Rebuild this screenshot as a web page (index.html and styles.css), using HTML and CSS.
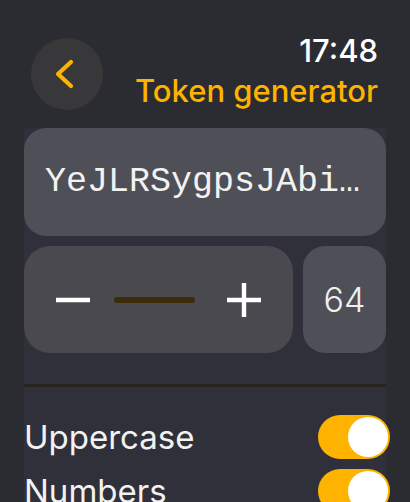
FILE: index.html
```html
<!DOCTYPE html>
<html lang="en">
<head>
  <meta charset="UTF-8">
  <meta name="viewport" content="width=device-width, initial-scale=1.0">
  <title>Token generator</title>
  <link rel="stylesheet" href="styles.css">
</head>
<body>
  <header class="top">
    <button class="back" type="button" aria-label="Back">
      <svg width="20" height="30" viewBox="0 0 20 30">
        <polyline points="16,3 3,15 16,27" fill="none" stroke="#fdb300" stroke-width="4.2" stroke-linecap="round" stroke-linejoin="round"/>
      </svg>
    </button>
    <div class="titles">
      <div class="time">17:48</div>
      <div class="title">Token generator</div>
    </div>
  </header>

  <main class="panel">
    <div class="token">YeJLRSygpsJAbi…</div>

    <div class="length-row">
      <div class="stepper">
        <svg class="sign minus" width="34" height="34" viewBox="0 0 34 34">
          <line x1="0" y1="17" x2="34" y2="17" stroke="#fff" stroke-width="4.4"/>
        </svg>
        <span class="bar"></span>
        <svg class="sign plus" width="34" height="34" viewBox="0 0 34 34">
          <line x1="0" y1="17" x2="34" y2="17" stroke="#fff" stroke-width="4.4"/>
          <line x1="17" y1="0" x2="17" y2="34" stroke="#fff" stroke-width="4.4"/>
        </svg>
      </div>
      <div class="count">64</div>
    </div>

    <div class="divider"></div>

    <div class="options">
      <div class="option">
        <span class="label">Uppercase</span>
        <span class="toggle"><span class="knob"></span></span>
      </div>
      <div class="option">
        <span class="label">Numbers</span>
        <span class="toggle"><span class="knob"></span></span>
      </div>
    </div>
  </main>
</body>
</html>
```

FILE: styles.css
```css
body {
  margin: 0;
  height: 502px;
  overflow: hidden;
  background-color: #2b2c31;
  font-family: Inter, "Noto Sans", sans-serif;
  color: #f2f2f2;
}
.top {
  height: 128px;
  box-sizing: border-box;
  display: flex;
  justify-content: space-between;
  align-items: flex-start;
  padding: 0 32px 0 31px;
}
.back {
  margin-top: 38px;
  width: 72px;
  height: 72px;
  border: none;
  border-radius: 50%;
  background-color: #38383b;
  display: flex;
  align-items: center;
  justify-content: center;
  padding: 0 4px 0 0;
}
.titles {
  margin-top: 31px;
  text-align: right;
}
.time {
  font-size: 31px;
  line-height: 40px;
  font-weight: 500;
  color: #ffffff;
}
.title {
  font-size: 31px;
  line-height: 40px;
  font-weight: 500;
  color: #fdb300;
}
.panel {
  margin: 0 24px;
  height: 374px;
  background-color: #2f303a;
}
.token {
  height: 108px;
  border-radius: 22px;
  background-color: #4f4f58;
  display: flex;
  align-items: center;
  padding-left: 21px;
  font-family: "Liberation Mono", monospace;
  font-size: 35px;
  color: #f2f2f2;
}
.length-row {
  display: flex;
  gap: 10px;
  margin-top: 10px;
  height: 107px;
}
.stepper {
  width: 269px;
  border-radius: 26px;
  background-color: #49494f;
  display: flex;
  align-items: center;
  padding-left: 32px;
  box-sizing: border-box;
}
.sign {
  display: block;
}
.bar {
  width: 81px;
  height: 6px;
  border-radius: 3px;
  background-color: #3b2c0a;
  margin: 0 32px 0 24px;
}
.count {
  flex: 1;
  border-radius: 22px;
  background-color: #4f4f58;
  display: flex;
  align-items: center;
  justify-content: center;
  font-size: 34px;
  font-weight: 300;
  color: #f0f0f0;
}
.divider {
  margin-top: 31px;
  height: 3px;
  background-color: #27231f;
}
.options {
  margin-top: 23px;
}
.option {
  height: 54px;
  display: flex;
  align-items: center;
  justify-content: space-between;
  margin-right: -4px;
}
.label {
  font-size: 33px;
}
.toggle {
  width: 72px;
  height: 44px;
  border-radius: 22px;
  background-color: #fdb300;
  display: flex;
  align-items: center;
  justify-content: flex-end;
  padding-right: 2px;
  box-sizing: border-box;
}
.knob {
  width: 40px;
  height: 40px;
  border-radius: 50%;
  background-color: #ffffff;
}
```
